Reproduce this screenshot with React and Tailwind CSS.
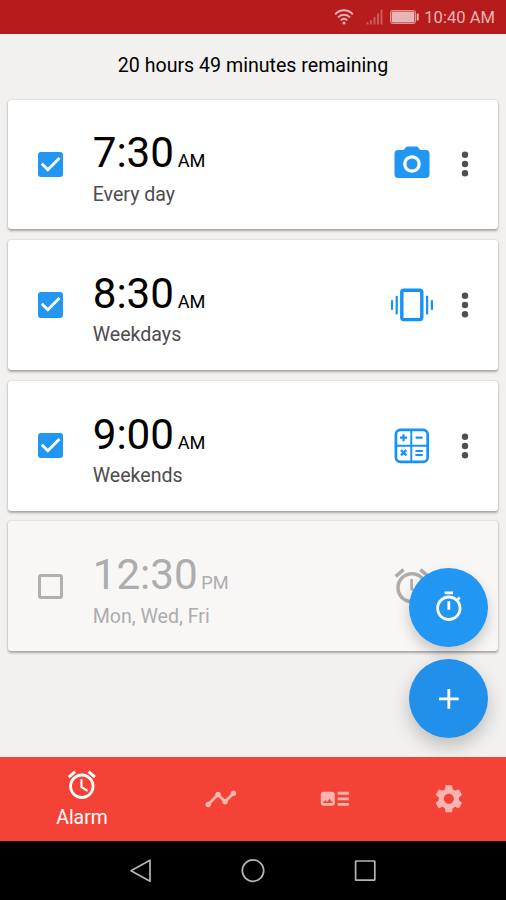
import React, { useState } from "react";
import { MdAdd, MdArtTrack, MdSettings, MdTimeline } from "react-icons/md";
import clsx from "clsx";

const ALARMS = [
  { id: 1, time: "7:30", period: "AM", days: "Every day", type: "photo", enabled: true },
  { id: 2, time: "8:30", period: "AM", days: "Weekdays", type: "shake", enabled: true },
  { id: 3, time: "9:00", period: "AM", days: "Weekends", type: "math", enabled: true },
  { id: 4, time: "12:30", period: "PM", days: "Mon, Wed, Fri", type: "default", enabled: false },
];

const AlarmIcon = ({ className }) => (
  <svg className={className} viewBox="0 0 24 24" fill="currentColor">
    <path d="M22 5.72l-4.6-3.86-1.29 1.53 4.6 3.86L22 5.72zM7.88 3.39L6.6 1.86 2 5.71l1.29 1.53 4.59-3.85zM12.5 8H11v6l4.75 2.85.75-1.23-4-2.37V8zM12 4c-4.97 0-9 4.03-9 9s4.02 9 9 9c4.97 0 9-4.03 9-9s-4.03-9-9-9zm0 16c-3.87 0-7-3.13-7-7s3.13-7 7-7 7 3.13 7 7-3.13 7-7 7z" />
  </svg>
);

const TimerIcon = ({ className }) => (
  <svg className={className} viewBox="0 0 24 24" fill="currentColor">
    <path d="M15 1H9v2h6V1zm-4 13h2V8h-2v6zm8.03-6.61l1.42-1.42c-.43-.51-.9-.99-1.41-1.41l-1.42 1.42C16.07 4.74 14.12 4 12 4c-4.97 0-9 4.03-9 9s4.02 9 9 9 9-4.03 9-9c0-2.12-.74-4.07-1.97-5.61zM12 20c-3.87 0-7-3.13-7-7s3.13-7 7-7 7 3.13 7 7-3.13 7-7 7z" />
  </svg>
);

const PhotoIcon = ({ className }) => (
  <svg className={className} viewBox="0 0 24 24" fill="currentColor">
    <circle cx="12" cy="12" r="3.2" />
    <path d="M9 2L7.17 4H4c-1.1 0-2 .9-2 2v12c0 1.1.9 2 2 2h16c1.1 0 2-.9 2-2V6c0-1.1-.9-2-2-2h-3.17L15 2H9zm3 15c-2.76 0-5-2.24-5-5s2.24-5 5-5 5 2.24 5 5-2.24 5-5 5z" />
  </svg>
);

const ShakeIcon = ({ className }) => (
  <svg className={className} viewBox="0 0 42 42" fill="currentColor">
    <rect x="10.8" y="6.2" width="20" height="29.4" rx="2" fill="none" stroke="currentColor" strokeWidth="3.4" />
    <rect x="-.1" y="16.2" width="2.2" height="9.6" />
    <rect x="4.6" y="11.8" width="2.2" height="18.6" />
    <rect x="35" y="11.8" width="2.2" height="18.6" />
    <rect x="39.8" y="16.2" width="2.2" height="9.6" />
  </svg>
);

const MathIcon = ({ className }) => (
  <svg className={className} viewBox="0 0 42 42" fill="none" stroke="currentColor">
    <rect x="4.9" y="4.8" width="31.8" height="32" rx="4.6" strokeWidth="2.7" />
    <path strokeWidth="1.9" d="M20.3 5v32M5 20.8h32" />
    <path strokeWidth="2.2" d="M9 12.7h7M12.5 9.2v7M24.6 12.7h7M10 25l5.4 5.4M15.4 25L10 30.4M24.4 26h7.4M24.4 30h7.4" />
  </svg>
);

const TYPE_ICONS = {
  photo: PhotoIcon,
  shake: ShakeIcon,
  math: MathIcon,
  default: AlarmIcon,
};

const TYPE_COLORS = {
  photo: "text-[#2196f3]",
  shake: "text-[#1492fa]",
  math: "text-[#1492fa]",
  default: "text-[#2196f3]",
};

const Checkbox = ({ checked, onClick }) => (
  <button
    type="button"
    role="checkbox"
    aria-checked={checked}
    onClick={onClick}
    className={clsx(
      "flex size-[25.3px] items-center justify-center rounded-[3px]",
      checked ? "bg-[#2196f3]" : "border-3 border-[#b1b0b0]"
    )}
  >
    {checked && (
      <svg className="size-full" viewBox="3 3 18 18" fill="white">
        <path d="M10 17l-5-5 1.41-1.41L10 14.17l7.59-7.59L19 8l-9 9z" />
      </svg>
    )}
  </button>
);

const StatusBar = () => (
  <header className="flex h-[33.5px] items-center justify-end bg-[#b71c1c] pr-[11px] text-[#e8b4b4]">
    <svg className="mr-[12px] h-[16px] w-[20px]" viewBox="0 0 20 16" fill="none" stroke="currentColor" strokeWidth="2">
      <path d="M1.2 5.3C6 0 14 0 18.8 5.3M4 8.4c3.3-3.6 8.7-3.6 12 0M6.8 11.3c1.8-2 4.6-2 6.4 0" />
      <circle cx="10" cy="14" r="1.6" fill="currentColor" stroke="none" />
    </svg>
    <svg className="mr-[7px] h-[16px] w-[17px] text-[#cb5c5c]" viewBox="0 0 17 16" fill="currentColor">
      <rect x=".5" y="13" width="2" height="2.5" rx=".5" />
      <rect x="4" y="11" width="2" height="4.5" rx=".5" />
      <rect x="7.5" y="8" width="2" height="7.5" rx=".5" />
      <rect x="11" y="4.5" width="2" height="11" rx=".5" />
      <rect x="14.5" y=".5" width="2" height="15" rx=".5" />
    </svg>
    <svg className="mr-[5px] h-[14px] w-[29px]" viewBox="0 0 29 14" fill="currentColor">
      <rect x=".5" y=".5" width="25" height="13" rx="1.8" fill="none" stroke="currentColor" strokeOpacity=".8" />
      <rect x="1.6" y="1.6" width="22.8" height="10.8" rx=".6" />
      <rect x="26.7" y="3.5" width="2" height="7" rx=".6" />
    </svg>
    <span className="pt-[3px] text-[16.6px] leading-none">10:40 AM</span>
  </header>
);

const AlarmCard = ({ alarm, onToggle }) => {
  const Icon = TYPE_ICONS[alarm.type];
  return (
    <li
      className={clsx(
        "flex h-[129.8px] items-center rounded-[3px] pl-[29.5px] shadow-[0_1.5px_2.5px_rgba(0,0,0,0.3),0_0_1.5px_rgba(0,0,0,0.16)]",
        alarm.enabled ? "bg-white text-black" : "bg-[#f8f7f6] text-[#adadad]"
      )}
    >
      <Checkbox checked={alarm.enabled} onClick={onToggle} />
      <div className="ml-[29.5px] flex-1 pt-[5.4px]">
        <p className="text-[42.2px] leading-[49px]">
          {alarm.time}
          <span className="ml-[3.6px] text-[18.2px]">{alarm.period}</span>
        </p>
        <p className={clsx("-mt-[2.6px] text-[19.6px] leading-[23px]", alarm.enabled && "text-[#4d4d4d]")}>
          {alarm.days}
        </p>
      </div>
      <Icon className={clsx("mr-[28px] size-[42px]", alarm.enabled && TYPE_COLORS[alarm.type])} />
      <button type="button" aria-label="More" className="mr-[29px] w-[8px]">
        {alarm.enabled && (
          <svg className="h-[26px] w-[8px]" viewBox="0 0 8 26" fill="#4f4f4f">
            <circle cx="4" cy="3.8" r="3.2" />
            <circle cx="4" cy="13" r="3.2" />
            <circle cx="4" cy="22.2" r="3.2" />
          </svg>
        )}
      </button>
    </li>
  );
};

const TabBar = () => (
  <nav className="flex h-[84.5px] items-center bg-[#f44336] text-[#fbb4af]">
    <button type="button" className="flex w-[164px] flex-col items-center text-white">
      <AlarmIcon className="size-[33.7px]" />
      <span className="mt-[4px] text-[19.4px] leading-[23px]">Alarm</span>
    </button>
    <button type="button" aria-label="History" className="flex flex-1 justify-center">
      <MdTimeline className="size-[33.7px]" />
    </button>
    <button type="button" aria-label="News" className="flex flex-1 justify-center">
      <MdArtTrack className="size-[33.7px]" />
    </button>
    <button type="button" aria-label="Settings" className="flex flex-1 justify-center">
      <MdSettings className="size-[33.7px]" />
    </button>
  </nav>
);

const SystemNav = () => (
  <footer className="flex h-[59px] items-center justify-center gap-[88px] bg-black">
    <svg className="size-[24px]" viewBox="0 0 24 24" fill="none" stroke="#b5b5b5" strokeWidth="1.7" strokeLinejoin="round">
      <path d="M21 1.2v21L2 11.7z" />
    </svg>
    <svg className="size-[24px]" viewBox="0 0 24 24" fill="none" stroke="#b5b5b5" strokeWidth="1.7">
      <circle cx="12" cy="11.6" r="10.7" />
    </svg>
    <svg className="size-[24px]" viewBox="0 0 24 24" fill="none" stroke="#b5b5b5" strokeWidth="1.7">
      <rect x="2.6" y="2" width="19.2" height="19.2" rx=".5" />
    </svg>
  </footer>
);

const App = () => {
  const [alarms, setAlarms] = useState(ALARMS);

  const toggle = (id) =>
    setAlarms((list) => list.map((a) => (a.id === id ? { ...a, enabled: !a.enabled } : a)));

  return (
    <div className="flex h-[900px] w-[506px] flex-col overflow-hidden bg-[#f2f1f0] font-['Roboto',sans-serif]">
      <StatusBar />

      <main className="relative min-h-0 flex-1 px-[8.4px]">
        <p className="pt-[20px] text-center text-[19.6px] leading-[23px] text-black">
          20 hours 49 minutes remaining
        </p>
        <ul className="mt-[23.1px] flex flex-col gap-[10.8px]">
          {alarms.map((alarm) => (
            <AlarmCard key={alarm.id} alarm={alarm} onToggle={() => toggle(alarm.id)} />
          ))}
        </ul>

        {/* Floating actions */}
        <div className="absolute right-[18.4px] bottom-[18.6px] flex flex-col gap-[12.6px] text-white">
          <button
            type="button"
            aria-label="Timer"
            className="flex size-[78.8px] items-center justify-center rounded-full bg-[#2196f3] pl-[1px] shadow-[0_7px_14px_rgba(0,0,0,0.2)]"
          >
            <TimerIcon className="size-[33.7px]" />
          </button>
          <button
            type="button"
            aria-label="Add alarm"
            className="flex size-[78.8px] items-center justify-center rounded-full bg-[#2190ea] pl-[1px] shadow-[0_8px_18px_rgba(0,0,0,0.22)]"
          >
            <MdAdd className="size-[33.7px]" />
          </button>
        </div>
      </main>

      <TabBar />
      <SystemNav />
    </div>
  );
};

export default App;
